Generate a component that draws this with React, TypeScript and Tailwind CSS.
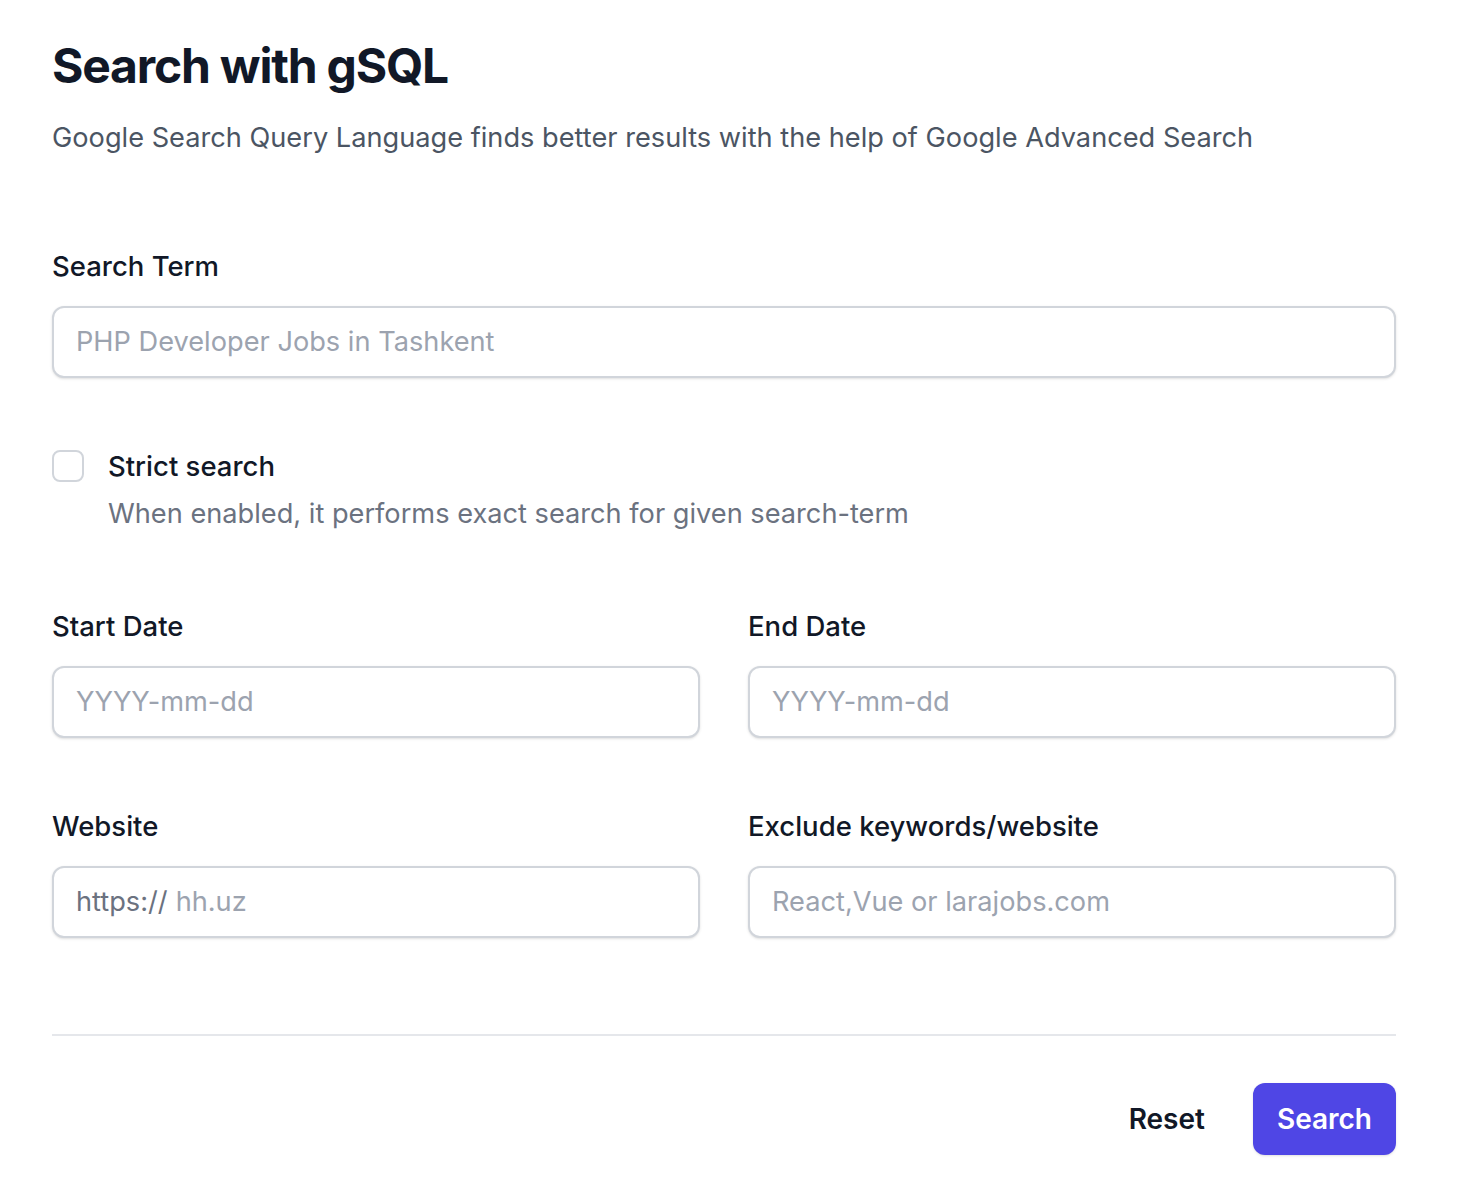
import * as React from "react";

function Field({
  label,
  placeholder,
  prefix,
}: {
  label: string;
  placeholder: string;
  prefix?: string;
}) {
  return (
    <div>
      <label className="block text-[27.5px] font-medium leading-[48px] text-[#111827]">
        {label}
      </label>
      <div className="mt-4 flex h-[72px] items-center rounded-xl border-2 border-[#d1d5db] bg-white px-[22px] shadow-sm">
        {prefix && (
          <span className="mr-2 select-none text-[27.2px] text-[#6b7280]">
            {prefix}
          </span>
        )}
        <input
          type="text"
          placeholder={placeholder}
          className="w-full bg-transparent text-[27.2px] text-[#111827] outline-none placeholder:text-[#9ca3af]"
        />
      </div>
    </div>
  );
}

export default function App() {
  const [strict, setStrict] = React.useState(false);

  return (
    <div className="min-h-screen bg-white pl-[52px] pt-[34px] font-['Inter',sans-serif]">
      <div className="w-[1344px]">
        <h1 className="text-[48px] font-bold leading-[64px] tracking-tight text-[#111827]">
          Search with gSQL
        </h1>
        <p className="mt-4 text-[27.2px] leading-[48px] text-[#4b5563]">
          Google Search Query Language finds better results with the help of
          Google Advanced Search
        </p>

        <form className="mt-20" onSubmit={(e) => e.preventDefault()}>
          <Field label="Search Term" placeholder="PHP Developer Jobs in Tashkent" />

          <div className="mt-16 flex gap-6">
            <div className="flex h-[48px] items-center">
              <button
                type="button"
                onClick={() => setStrict(!strict)}
                className={
                  strict
                    ? "h-8 w-8 rounded-lg border-2 border-[#4f46e5] bg-[#4f46e5]"
                    : "h-8 w-8 rounded-lg border-2 border-[#d1d5db] bg-white"
                }
                aria-label="Strict search"
              />
            </div>
            <div>
              <div className="text-[27.5px] font-medium leading-[48px] text-[#111827]">
                Strict search
              </div>
              <p className="text-[27.2px] leading-[48px] text-[#6b7280]">
                When enabled, it performs exact search for given search-term
              </p>
            </div>
          </div>

          <div className="mt-16 grid grid-cols-2 gap-x-12 gap-y-16">
            <Field label="Start Date" placeholder="YYYY-mm-dd" />
            <Field label="End Date" placeholder="YYYY-mm-dd" />
            <Field label="Website" placeholder="hh.uz" prefix="https://" />
            <Field
              label="Exclude keywords/website"
              placeholder="React,Vue or larajobs.com"
            />
          </div>

          <div className="mt-[96px] h-[2px] bg-[#e5e7eb]" />

          <div className="mt-[47px] flex items-center justify-end gap-x-12">
            <button
              type="button"
              className="text-[28px] font-semibold leading-[48px] text-[#111827]"
            >
              Reset
            </button>
            <button
              type="submit"
              className="h-[72px] rounded-xl bg-[#4f46e5] px-6 text-[28px] font-semibold text-white shadow-sm"
            >
              Search
            </button>
          </div>
        </form>
      </div>
    </div>
  );
}
